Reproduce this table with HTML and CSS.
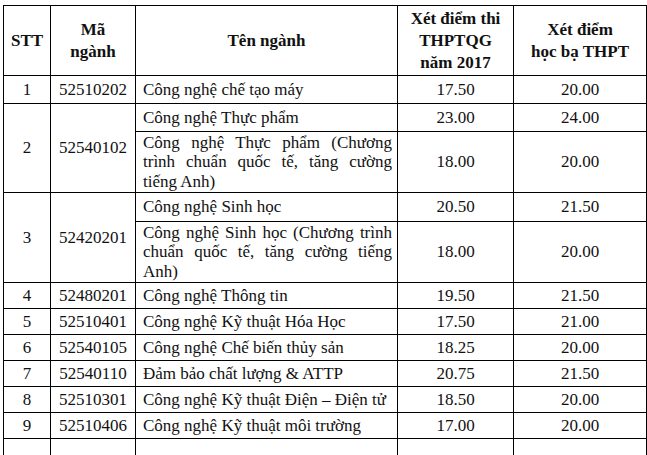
FILE: index.html
```html
<!DOCTYPE html>
<html lang="vi">
<head>
<meta charset="utf-8">
<title>Điểm chuẩn</title>
<link rel="stylesheet" href="styles.css">
</head>
<body>
<div class="page">
<table class="scores">
  <colgroup>
    <col class="c-stt">
    <col class="c-ma">
    <col class="c-ten">
    <col class="c-thi">
    <col class="c-hb">
  </colgroup>
  <thead>
    <tr class="h-row">
      <th>STT</th>
      <th>Mã<br>ngành</th>
      <th>Tên ngành</th>
      <th>Xét điểm thi<br>THPTQG<br>năm 2017</th>
      <th>Xét điểm<br>học bạ THPT</th>
    </tr>
  </thead>
  <tbody>
    <tr class="r28">
      <td>1</td><td>52510202</td><td class="name">Công nghệ chế tạo máy</td><td>17.50</td><td>20.00</td>
    </tr>
    <tr class="r28">
      <td rowspan="2">2</td><td rowspan="2">52540102</td><td class="name">Công nghệ Thực phẩm</td><td>23.00</td><td>24.00</td>
    </tr>
    <tr class="r61">
      <td class="name multi"><span class="jl">Công nghệ Thực phẩm (Chương</span><span class="jl">trình chuẩn quốc tế, tăng cường</span><span class="ll">tiếng Anh)</span></td><td>18.00</td><td>20.00</td>
    </tr>
    <tr class="r29">
      <td rowspan="2">3</td><td rowspan="2">52420201</td><td class="name">Công nghệ Sinh học</td><td>20.50</td><td>21.50</td>
    </tr>
    <tr class="r61">
      <td class="name multi"><span class="jl">Công nghệ Sinh học (Chương trình</span><span class="jl">chuẩn quốc tế, tăng cường tiếng</span><span class="ll">Anh)</span></td><td>18.00</td><td>20.00</td>
    </tr>
    <tr class="r26">
      <td>4</td><td>52480201</td><td class="name">Công nghệ Thông tin</td><td>19.50</td><td>21.50</td>
    </tr>
    <tr class="r26">
      <td>5</td><td>52510401</td><td class="name">Công nghệ Kỹ thuật Hóa Học</td><td>17.50</td><td>21.00</td>
    </tr>
    <tr class="r26">
      <td>6</td><td>52540105</td><td class="name">Công nghệ Chế biến thủy sản</td><td>18.25</td><td>20.00</td>
    </tr>
    <tr class="r26">
      <td>7</td><td>52540110</td><td class="name">Đảm bảo chất lượng &amp; ATTP</td><td>20.75</td><td>21.50</td>
    </tr>
    <tr class="r26">
      <td>8</td><td>52510301</td><td class="name">Công nghệ Kỹ thuật Điện – Điện tử</td><td>18.50</td><td>20.00</td>
    </tr>
    <tr class="r26">
      <td>9</td><td>52510406</td><td class="name">Công nghệ Kỹ thuật môi trường</td><td>17.00</td><td>20.00</td>
    </tr>
    <tr class="r-tail">
      <td></td><td></td><td class="name"></td><td></td><td></td>
    </tr>
  </tbody>
</table>
</div>
</body>
</html>
```
FILE: styles.css
```css
html, body {
  margin: 0;
  padding: 0;
  background: #ffffff;
}
body {
  width: 647px;
  height: 455px;
  overflow: hidden;
  font-family: "Liberation Serif", serif;
  color: #111111;
}
.page {
  padding: 5px 0 0 3px;
}
.scores {
  border-collapse: collapse;
  table-layout: fixed;
  width: 643px;
  font-size: 17px;
}
.c-stt { width: 47px; }
.c-ma { width: 85px; }
.c-ten { width: 262px; }
.c-thi { width: 116px; }
.c-hb { width: 133px; }

.scores th,
.scores td {
  border: 1px solid #000000;
  padding: 0;
  text-align: center;
  vertical-align: middle;
}
.scores th {
  font-weight: bold;
  line-height: 22px;
  height: 69px;
}
.scores td {
  line-height: 19.5px;
}
.scores td.name {
  text-align: left;
  padding: 0 5px 0 7px;
}
.multi .jl {
  display: block;
  text-align: justify;
  text-align-last: justify;
}
.multi .ll {
  display: block;
}
.r28 td { height: 27px; }
.r29 td { height: 28px; }
.r61 td { height: 60px; }
.r26 td { height: 25px; }
.r-tail td { height: 16px; border-bottom: 0; }
```
